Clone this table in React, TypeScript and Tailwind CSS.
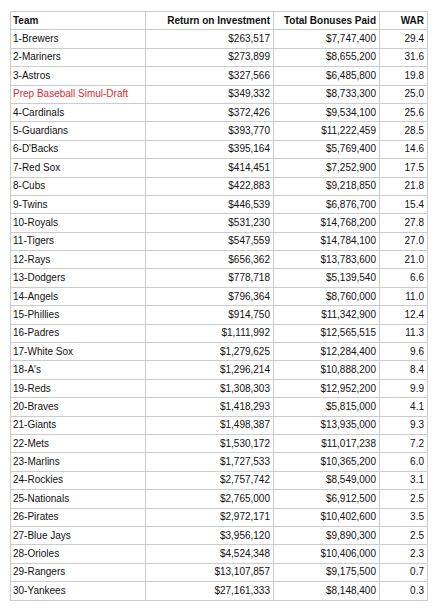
import { FC } from "react";

interface Row {
  team: string;
  roi: string;
  bonus: string;
  war: string;
  highlight?: boolean;
}

const rows: Row[] = [
  { team: "1-Brewers", roi: "$263,517", bonus: "$7,747,400", war: "29.4" },
  { team: "2-Mariners", roi: "$273,899", bonus: "$8,655,200", war: "31.6" },
  { team: "3-Astros", roi: "$327,566", bonus: "$6,485,800", war: "19.8" },
  { team: "Prep Baseball Simul-Draft", roi: "$349,332", bonus: "$8,733,300", war: "25.0", highlight: true },
  { team: "4-Cardinals", roi: "$372,426", bonus: "$9,534,100", war: "25.6" },
  { team: "5-Guardians", roi: "$393,770", bonus: "$11,222,459", war: "28.5" },
  { team: "6-D'Backs", roi: "$395,164", bonus: "$5,769,400", war: "14.6" },
  { team: "7-Red Sox", roi: "$414,451", bonus: "$7,252,900", war: "17.5" },
  { team: "8-Cubs", roi: "$422,883", bonus: "$9,218,850", war: "21.8" },
  { team: "9-Twins", roi: "$446,539", bonus: "$6,876,700", war: "15.4" },
  { team: "10-Royals", roi: "$531,230", bonus: "$14,768,200", war: "27.8" },
  { team: "11-Tigers", roi: "$547,559", bonus: "$14,784,100", war: "27.0" },
  { team: "12-Rays", roi: "$656,362", bonus: "$13,783,600", war: "21.0" },
  { team: "13-Dodgers", roi: "$778,718", bonus: "$5,139,540", war: "6.6" },
  { team: "14-Angels", roi: "$796,364", bonus: "$8,760,000", war: "11.0" },
  { team: "15-Phillies", roi: "$914,750", bonus: "$11,342,900", war: "12.4" },
  { team: "16-Padres", roi: "$1,111,992", bonus: "$12,565,515", war: "11.3" },
  { team: "17-White Sox", roi: "$1,279,625", bonus: "$12,284,400", war: "9.6" },
  { team: "18-A's", roi: "$1,296,214", bonus: "$10,888,200", war: "8.4" },
  { team: "19-Reds", roi: "$1,308,303", bonus: "$12,952,200", war: "9.9" },
  { team: "20-Braves", roi: "$1,418,293", bonus: "$5,815,000", war: "4.1" },
  { team: "21-Giants", roi: "$1,498,387", bonus: "$13,935,000", war: "9.3" },
  { team: "22-Mets", roi: "$1,530,172", bonus: "$11,017,238", war: "7.2" },
  { team: "23-Marlins", roi: "$1,727,533", bonus: "$10,365,200", war: "6.0" },
  { team: "24-Rockies", roi: "$2,757,742", bonus: "$8,549,000", war: "3.1" },
  { team: "25-Nationals", roi: "$2,765,000", bonus: "$6,912,500", war: "2.5" },
  { team: "26-Pirates", roi: "$2,972,171", bonus: "$10,402,600", war: "3.5" },
  { team: "27-Blue Jays", roi: "$3,956,120", bonus: "$9,890,300", war: "2.5" },
  { team: "28-Orioles", roi: "$4,524,348", bonus: "$10,406,000", war: "2.3" },
  { team: "29-Rangers", roi: "$13,107,857", bonus: "$9,175,500", war: "0.7" },
  { team: "30-Yankees", roi: "$27,161,333", bonus: "$8,148,400", war: "0.3" },
];

const App: FC = () => {
  return (
    <div className="w-[439px] h-[611px] bg-white pt-[11px] pl-[10px]" style={{ fontFamily: '"Liberation Sans", Arial, sans-serif' }}>
      <table className="border-collapse text-[10px] leading-none text-[#111]">
        <colgroup>
          <col className="w-[135px]" />
          <col className="w-[128px]" />
          <col className="w-[106px]" />
          <col className="w-[48px]" />
        </colgroup>
        <thead>
          <tr className="h-[18.4px]">
            <th className="border border-[#cccccc] px-[2px] text-left font-bold">Team</th>
            <th className="border border-[#cccccc] px-[3px] text-right font-bold">Return on Investment</th>
            <th className="border border-[#cccccc] px-[3px] text-right font-bold">Total Bonuses Paid</th>
            <th className="border border-[#cccccc] px-[3px] text-right font-bold">WAR</th>
          </tr>
        </thead>
        <tbody>
          {rows.map((r) => (
            <tr key={r.team} className="h-[18.4px]">
              <td className={"border border-[#cccccc] px-[2px] text-left " + (r.highlight ? "text-[#e0282e]" : "")}>{r.team}</td>
              <td className="border border-[#cccccc] px-[3px] text-right">{r.roi}</td>
              <td className="border border-[#cccccc] px-[3px] text-right">{r.bonus}</td>
              <td className="border border-[#cccccc] px-[3px] text-right">{r.war}</td>
            </tr>
          ))}
        </tbody>
      </table>
    </div>
  );
};

export default App;
